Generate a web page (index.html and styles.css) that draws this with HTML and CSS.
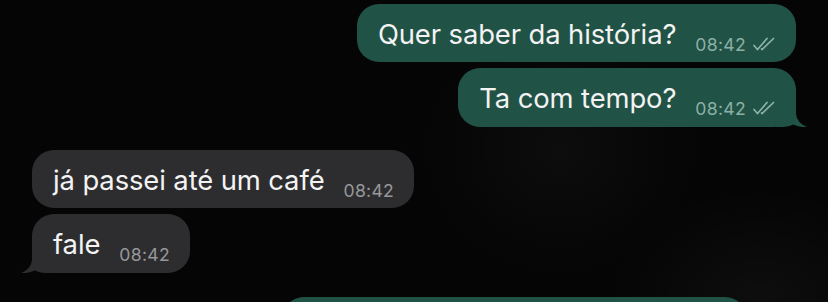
FILE: index.html
```html
<!DOCTYPE html>
<html lang="pt">
<head>
<meta charset="utf-8">
<link rel="stylesheet" href="styles.css">
</head>
<body>
<div class="chat">
  <div class="group out">
    <div class="bubble out">
      <span class="text">Quer saber da história?</span>
      <span class="meta"><span class="time">08:42</span><svg class="ticks" viewBox="0 0 22 14"><path d="M1 8.5 L4.5 12.5 L14 1.5 M8.6 12 L9.2 12.5 L20.5 1.5" /></svg></span>
    </div>
    <div class="bubble out tail">
      <span class="text">Ta com tempo?</span>
      <span class="meta"><span class="time">08:42</span><svg class="ticks" viewBox="0 0 22 14"><path d="M1 8.5 L4.5 12.5 L14 1.5 M8.6 12 L9.2 12.5 L20.5 1.5" /></svg></span>
      <svg class="tail-shape" viewBox="0 0 31 26"><path d="M0 0 H20 V13 Q21 22 31 26 Q23 26.6 17 23.6 Q13 26 6 26 H0 Z" /></svg>
    </div>
  </div>
  <div class="group in">
    <div class="bubble in">
      <span class="text">já passei até um café</span>
      <span class="meta"><span class="time">08:42</span></span>
    </div>
    <div class="bubble in tail">
      <span class="text">fale</span>
      <span class="meta"><span class="time">08:42</span></span>
      <svg class="tail-shape" viewBox="0 0 31 26"><path d="M0 0 H20 V13 Q21 22 31 26 Q23 26.6 17 23.6 Q13 26 6 26 H0 Z" /></svg>
    </div>
  </div>
  <div class="group out next">
    <div class="bubble out wide"></div>
  </div>
</div>
</body>
</html>
```

FILE: styles.css
```css
html, body {
  margin: 0;
  padding: 0;
  height: 302px;
  overflow: hidden;
}
body {
  background:
    radial-gradient(ellipse 220px 160px at 760px 300px, rgba(255,255,255,0.035), rgba(255,255,255,0) 70%),
    radial-gradient(ellipse 200px 180px at 560px 150px, rgba(255,255,255,0.03), rgba(255,255,255,0) 70%),
    #050506;
  font-family: Inter, "Noto Sans", "Liberation Sans", sans-serif;
  -webkit-font-smoothing: antialiased;
}
.chat {
  display: flex;
  flex-direction: column;
  padding: 4px 32px 0 32px;
  gap: 23px;
}
.group {
  display: flex;
  flex-direction: column;
  gap: 6px;
}
.group.out { align-items: flex-end; }
.group.in { align-items: flex-start; }
.group.next { margin-top: 1px; padding-right: 49px; }
.bubble {
  position: relative;
  display: flex;
  align-items: baseline;
  height: 58px;
  box-sizing: border-box;
  padding: 0 21px 0 21px;
  border-radius: 22px;
  color: #f3f3f3;
}
.bubble.out { background: #215246; }
.bubble.in { background: #2d2d2f; padding-right: 20px; }
.bubble.tail { height: 59px; }
.bubble.wide { width: 465px; }
.text {
  font-size: 27.4px;
  line-height: 60px;
  letter-spacing: -0.1px;
  white-space: nowrap;
}
.meta {
  display: inline-flex;
  align-items: baseline;
  margin-left: 19px;
  position: relative;
  top: 7px;
}
.time {
  font-size: 17.6px;
  letter-spacing: 0.3px;
}
.bubble.out .time { color: #8cb0a5; }
.bubble.in .time { color: #98989b; }
.ticks {
  width: 22px;
  height: 14px;
  margin-left: 7px;
  fill: none;
  stroke: #8db3a7;
  stroke-width: 1.7;
  stroke-linecap: round;
  stroke-linejoin: round;
}
.tail-shape {
  position: absolute;
  bottom: 0;
  width: 31px;
  height: 26px;
}
.bubble.out .tail-shape { right: -11px; fill: #215246; }
.bubble.in .tail-shape { left: -11px; fill: #2d2d2f; transform: scaleX(-1); }
```
